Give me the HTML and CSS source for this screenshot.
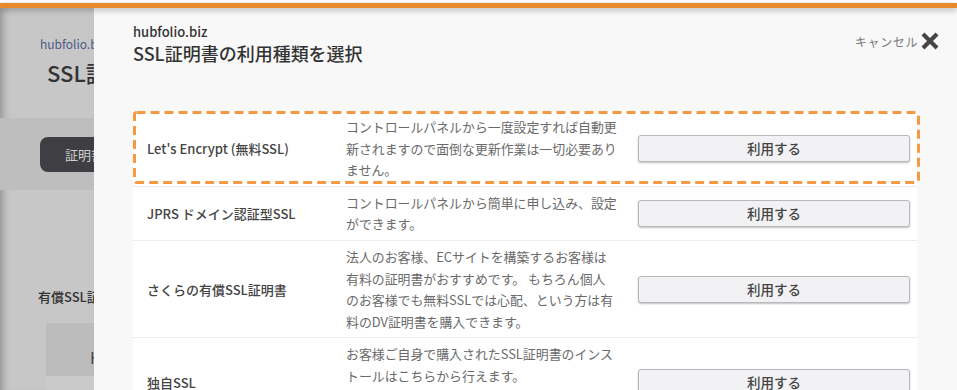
FILE: index.html
```html
<!DOCTYPE html>
<html lang="ja">
<head>
    <meta charset="UTF-8">
    <meta name="viewport" content="width=device-width, initial-scale=1.0">
    <title>SSL証明書の利用種類を選択</title>
    <link rel="stylesheet" href="styles.css">
</head>
<body>
    <!-- オレンジのヘッダーライン -->
    <div class="topbar"></div>

    <div class="screen">
        <!-- 後ろのページ（暗くなっている部分） -->
        <div class="backdrop">
            <div class="backdrop-inner">
                <p class="bd-domain">hubfolio.biz</p>
                <h2 class="bd-title">SSL証明書</h2>
                <div class="bd-band">
                    <span class="bd-button">証明書を設定</span>
                </div>
                <p class="bd-label">有償SSL証明書</p>
                <div class="bd-box">HTTPS</div>
                <div class="bd-row"></div>
            </div>
        </div>

        <!-- モーダル -->
        <div class="modal">
            <div class="modal-head">
                <div>
                    <p class="domain">hubfolio.biz</p>
                    <h1 class="title">SSL証明書の利用種類を選択</h1>
                </div>
                <a class="cancel">
                    キャンセル
                    <svg width="20" height="20" viewBox="0 0 20 20">
                        <path d="M3 3 L17 17 M17 3 L3 17" stroke="#454545" stroke-width="4.2" fill="none"/>
                    </svg>
                </a>
            </div>

            <div class="ssl-table">
                <div class="ssl-row">
                    <div class="ssl-name">Let's Encrypt (無料SSL)</div>
                    <div class="ssl-desc">コントロールパネルから一度設定すれば自動更<br>新されますので面倒な更新作業は一切必要あり<br>ません。</div>
                    <div><button class="use-btn">利用する</button></div>
                </div>
                <div class="ssl-row">
                    <div class="ssl-name">JPRS ドメイン認証型SSL</div>
                    <div class="ssl-desc">コントロールパネルから簡単に申し込み、設定<br>ができます。</div>
                    <div><button class="use-btn">利用する</button></div>
                </div>
                <div class="ssl-row">
                    <div class="ssl-name">さくらの有償SSL証明書</div>
                    <div class="ssl-desc">法人のお客様、ECサイトを構築するお客様は<br>有料の証明書がおすすめです。 もちろん個人<br>のお客様でも無料SSLでは心配、という方は有<br>料のDV証明書を購入できます。</div>
                    <div><button class="use-btn">利用する</button></div>
                </div>
                <div class="ssl-row">
                    <div class="ssl-name">独自SSL</div>
                    <div class="ssl-desc ssl-desc-last">お客様ご自身で購入されたSSL証明書のインス<br>トールはこちらから行えます。<br>&nbsp;</div>
                    <div><button class="use-btn">利用する</button></div>
                </div>

                <!-- 強調用の点線枠 -->
                <div class="highlight">
                    <svg width="787" height="73">
                        <rect x="1.5" y="1.5" width="784" height="70" rx="2" fill="none" stroke="#f59a42" stroke-width="3" stroke-dasharray="9 5"/>
                    </svg>
                </div>
            </div>
        </div>
    </div>
</body>
</html>
```

FILE: styles.css
```css
/* Allgemein */
* {
    box-sizing: border-box;
}

body {
    margin: 0;
    padding-top: 3px;
    background-color: #ffffff;
    font-family: "Noto Sans CJK JP", "Noto Sans", sans-serif;
    color: #333;
    height: 390px;
    overflow: hidden;
    display: flex;
    flex-direction: column;
}

p, h1, h2 {
    margin: 0;
}

.topbar {
    height: 5px;
    background-color: #e98b2d;
    box-shadow: 0 2px 6px rgba(0, 0, 0, 0.28);
    position: relative;
    z-index: 2;
}

.screen {
    flex: 1;
    display: flex;
    min-height: 0;
}

/* Hintergrundseite */
.backdrop {
    width: 94px;
    flex-shrink: 0;
    overflow: hidden;
    background-color: #c7c7c7;
    box-shadow: inset 9px 0 8px -7px rgba(0, 0, 0, 0.3);
}

.backdrop-inner {
    width: 400px;
}

.bd-domain {
    margin: 28px 0 0 40px;
    font-size: 12px;
    line-height: 16px;
    color: #4d5b82;
}

.bd-title {
    margin: 5px 0 0 47px;
    font-size: 22px;
    line-height: 30px;
    font-weight: 500;
    color: #333;
}

.bd-band {
    margin-top: 31px;
    height: 72px;
    padding: 19px 0 0 40px;
    background-color: #bebebe;
}

.bd-button {
    display: block;
    width: 200px;
    height: 35px;
    line-height: 35px;
    padding-left: 25px;
    border-radius: 8px;
    background-color: #3f3e43;
    color: #cfcfcf;
    font-size: 13px;
}

.bd-label {
    margin: 99px 0 0 38px;
    font-size: 13px;
    line-height: 16px;
    font-weight: 500;
    color: #333;
}

.bd-box {
    margin: 18px 0 0 46px;
    height: 53px;
    padding: 24px 0 0 44px;
    background-color: #bcbcbc;
    font-size: 16px;
    line-height: 20px;
    color: #444;
}

.bd-row {
    margin-left: 46px;
    height: 40px;
    background-color: #cacaca;
}

/* Modal */
.modal {
    flex: 1;
    background-color: #f8f8f8;
    padding: 16px 17px 0 39px;
    overflow: hidden;
}

.modal-head {
    display: flex;
    justify-content: space-between;
    align-items: flex-start;
}

.domain {
    font-size: 13px;
    line-height: 16px;
    font-weight: 500;
    color: #333;
}

.title {
    font-size: 18px;
    line-height: 26px;
    font-weight: 500;
    color: #333;
}

.cancel {
    display: flex;
    align-items: center;
    gap: 2px;
    margin-top: 7px;
    font-size: 12px;
    letter-spacing: 0.6px;
    color: #7a7a7a;
    cursor: pointer;
}

/* Tabelle */
.ssl-table {
    position: relative;
    margin-top: 45px;
    width: 784px;
    background-color: #ffffff;
}

.ssl-row {
    display: grid;
    grid-template-columns: 199px 292px 272px;
    align-items: center;
    padding: 5px 7px 5px 14px;
    border-bottom: 1px solid #ececec;
}

.ssl-name {
    font-size: 13px;
    font-weight: 500;
    color: #444;
}

.ssl-desc {
    font-size: 12.9px;
    line-height: 21.6px;
    color: #6a6a6a;
    white-space: nowrap;
}

.ssl-desc-last {
    padding-bottom: 13px;
}

.use-btn {
    display: block;
    width: 272px;
    height: 27px;
    border: 1px solid #b9b9bd;
    border-radius: 3px;
    background-color: #f2f2f4;
    box-shadow: 0 1px 2px rgba(0, 0, 0, 0.25);
    font-family: inherit;
    font-size: 13.5px;
    font-weight: 500;
    color: #444;
    cursor: pointer;
}

/* Markierung */
.highlight {
    position: absolute;
    top: 0;
    left: 0;
    width: 787px;
    height: 73px;
    pointer-events: none;
}

.highlight svg {
    display: block;
}
```
